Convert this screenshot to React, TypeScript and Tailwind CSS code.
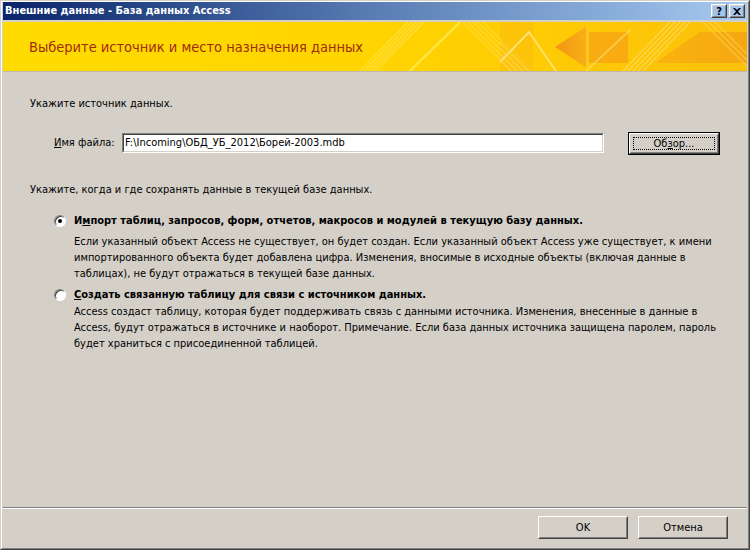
import React from "react";

const FONT = '"DejaVu Sans Condensed", "DejaVu Sans", Tahoma, sans-serif';

function Banner() {
  return (
    <div className="relative h-[49px] overflow-hidden bg-gradient-to-r from-[#ffdc00] via-[#ffd400] to-[#fcc00a]">
      <svg className="absolute inset-0" width="744" height="49" viewBox="0 0 744 49">
        <defs>
          <linearGradient id="ar" x1="0" x2="1" y1="0" y2="0">
            <stop offset="0" stopColor="#f39416" />
            <stop offset="1" stopColor="#f8b014" />
          </linearGradient>
          <linearGradient id="tr" x1="0" x2="1" y1="0" y2="0">
            <stop offset="0" stopColor="#f8b010" />
            <stop offset="1" stopColor="#f5a312" />
          </linearGradient>
        </defs>
        <g stroke="#ffe870" strokeOpacity="0.55" strokeWidth="1.2">
          <line x1="357" y1="49" x2="405" y2="0" />
          <line x1="361" y1="49" x2="409" y2="0" />
          <line x1="365" y1="49" x2="413" y2="0" />
          <line x1="369" y1="49" x2="417" y2="0" />
          <line x1="373" y1="49" x2="421" y2="0" />
        </g>
        <line x1="407" y1="49" x2="457" y2="0" stroke="#fff060" strokeOpacity="0.8" strokeWidth="2" />
        <g stroke="#ffe870" strokeOpacity="0.45" strokeWidth="1.2">
          <line x1="460" y1="0" x2="509" y2="49" />
          <line x1="465" y1="0" x2="514" y2="49" />
          <line x1="470" y1="0" x2="519" y2="49" />
          <line x1="475" y1="0" x2="524" y2="49" />
          <line x1="480" y1="0" x2="529" y2="49" />
        </g>
        <polygon points="497,0 530,0 530,49 497,49" fill="#fab80f" opacity="0.45" />
        <polyline points="497,40 526,10 553,49" fill="none" stroke="#ffe680" strokeWidth="2" opacity="0.85" />
        <g stroke="#ffe070" strokeOpacity="0.5" strokeWidth="1.2">
          <line x1="497" y1="20" x2="526" y2="49" />
          <line x1="497" y1="26" x2="520" y2="49" />
          <line x1="497" y1="32" x2="514" y2="49" />
          <line x1="497" y1="38" x2="508" y2="49" />
        </g>
        <polygon points="552,25 584,4 584,46" fill="url(#ar)" />
        <polygon points="586,10 625,10 625,41 586,41" fill="#f8ac12" />
        <line x1="584" y1="4" x2="584" y2="46" stroke="#ffd040" strokeWidth="1" />
        <polyline points="583,49 628,7" fill="none" stroke="#ffe070" strokeWidth="1.5" opacity="0.7" />
        <g stroke="#ffe88a" strokeOpacity="0.55" strokeWidth="1.2">
          <line x1="620" y1="49" x2="667" y2="0" />
          <line x1="625" y1="49" x2="672" y2="0" />
          <line x1="630" y1="49" x2="677" y2="0" />
          <line x1="635" y1="49" x2="682" y2="0" />
          <line x1="640" y1="49" x2="687" y2="0" />
        </g>
        <polygon points="652,41 744,41 744,10 697,10" fill="url(#tr)" opacity="0.85" />
        <g stroke="#ffe070" strokeOpacity="0.5" strokeWidth="1.2">
          <line x1="700" y1="0" x2="744" y2="44" />
          <line x1="706" y1="0" x2="744" y2="38" />
          <line x1="712" y1="0" x2="744" y2="32" />
        </g>
      </svg>
      <div
        className="relative whitespace-nowrap pl-[26px] pt-[15px] text-[14.5px] leading-[20px] text-[#a02c10]"
        style={{ fontFamily: FONT }}
      >
        Выберите источник и место назначения данных
      </div>
    </div>
  );
}

function Radio({ checked }: { checked?: boolean }) {
  return (
    <span className="relative inline-flex h-[12px] w-[12px] shrink-0 items-center justify-center rounded-full border border-t-[#808080] border-l-[#808080] border-r-[#ffffff] border-b-[#ffffff] bg-white shadow-[inset_1px_1px_0_#404040]">
      {checked && <span className="h-[4px] w-[4px] rounded-full bg-black" />}
    </span>
  );
}

function WinButton({ children, focused, className }: { children: React.ReactNode; focused?: boolean; className?: string }) {
  if (focused) {
    return (
      <div className={`border border-black ${className ?? ""}`}>
        <div className="h-full border border-t-white border-l-white border-r-[#404040] border-b-[#404040]">
          <div className="flex h-full items-center justify-center border border-t-[#d4d0c8] border-l-[#d4d0c8] border-r-[#808080] border-b-[#808080]">
            <div className="flex h-[calc(100%-4px)] w-[calc(100%-4px)] items-center justify-center border border-dotted border-black">
              {children}
            </div>
          </div>
        </div>
      </div>
    );
  }
  return (
    <div className={`border border-t-white border-l-white border-r-[#404040] border-b-[#404040] ${className ?? ""}`}>
      <div className="flex h-full items-center justify-center border border-t-[#d4d0c8] border-l-[#d4d0c8] border-r-[#808080] border-b-[#808080]">
        {children}
      </div>
    </div>
  );
}

export default function App() {
  return (
    <div
      className="h-[550px] w-[750px] overflow-hidden bg-[#d4d0c8] text-[11px] leading-[16px] text-black"
      style={{ fontFamily: FONT }}
    >
      <div className="flex h-full flex-col border border-t-[#d4d0c8] border-l-[#d4d0c8] border-r-[#404040] border-b-[#404040]">
        <div className="flex h-full flex-col border border-t-white border-l-white border-r-[#808080] border-b-[#808080] px-px">
          {/* title bar */}
          <div className="flex h-[18px] shrink-0 items-center justify-between bg-gradient-to-r from-[#0a246a] via-[#5a7db4] to-[#a6caf0] pl-[2px] pr-[2px]">
            <span className="whitespace-nowrap text-[11px] font-bold text-white">
              Внешние данные - База данных Access
            </span>
            <div className="flex gap-[2px]">
              <WinButton className="h-[14px] w-[16px]">
                <span className="text-[11px] font-bold leading-none">?</span>
              </WinButton>
              <WinButton className="h-[14px] w-[16px]">
                <svg width="8" height="7" viewBox="0 0 8 7">
                  <path d="M0 0h2l2 2 2-2h2L5 3.5 8 7H6L4 5 2 7H0l3-3.5z" fill="black" />
                </svg>
              </WinButton>
            </div>
          </div>
          <div className="mt-[2px] border-b border-[#bdb9b0]">
            <Banner />
          </div>

          {/* content */}
          <div className="flex flex-1 flex-col whitespace-nowrap">
            <div className="pl-[27px] pt-[24px]">Укажите источник данных.</div>
            <div className="mt-[18px] flex items-center">
              <div className="ml-[51px] w-[68px]">
                <span className="underline">И</span>мя файла:
              </div>
              <div className="flex h-[20px] w-[482px] items-center border border-t-[#808080] border-l-[#808080] border-r-white border-b-white bg-white">
                <div className="flex h-full w-full items-center border border-t-[#404040] border-l-[#404040] border-r-[#d4d0c8] border-b-[#d4d0c8] pl-px">
                  F:\Incoming\ОБД_УБ_2012\Борей-2003.mdb
                </div>
              </div>
              <WinButton focused className="ml-[24px] mt-[2px] h-[23px] w-[92px]">
                <span>
                  Об<span className="underline">з</span>ор...
                </span>
              </WinButton>
            </div>
            <div className="mt-[27px] pl-[27px]">Укажите, когда и где сохранять данные в текущей базе данных.</div>

            <div className="mt-[15px] flex items-center pl-[51px]">
              <Radio checked />
              <span className="ml-[8px] font-bold">
                И<span className="underline">м</span>порт таблиц, запросов, форм, отчетов, макросов и модулей в текущую базу данных.
              </span>
            </div>
            <div className="mt-[5px] pl-[71px]">
              Если указанный объект Access не существует, он будет создан. Если указанный объект Access уже существует, к имени
              <br />
              импортированного объекта будет добавлена цифра. Изменения, вносимые в исходные объекты (включая данные в
              <br />
              таблицах), не будут отражаться в текущей базе данных.
            </div>

            <div className="mt-[5px] flex items-center pl-[51px]">
              <Radio />
              <span className="ml-[8px] font-bold">
                <span className="underline">С</span>оздать связанную таблицу для связи с источником данных.
              </span>
            </div>
            <div className="mt-[1px] pl-[71px]">
              Access создаст таблицу, которая будет поддерживать связь с данными источника. Изменения, внесенные в данные в
              <br />
              Access, будут отражаться в источнике и наоборот. Примечание. Если база данных источника защищена паролем, пароль
              <br />
              будет храниться с присоединенной таблицей.
            </div>

            <div className="flex-1" />
            <div className="border-t border-b border-t-[#808080] border-b-white" />
            <div className="flex h-[39px] justify-end gap-[10px] pr-[19px] pt-[7px]">
              <WinButton className="h-[23px] w-[90px]">OK</WinButton>
              <WinButton className="h-[23px] w-[90px]">Отмена</WinButton>
            </div>
          </div>
        </div>
      </div>
    </div>
  );
}
